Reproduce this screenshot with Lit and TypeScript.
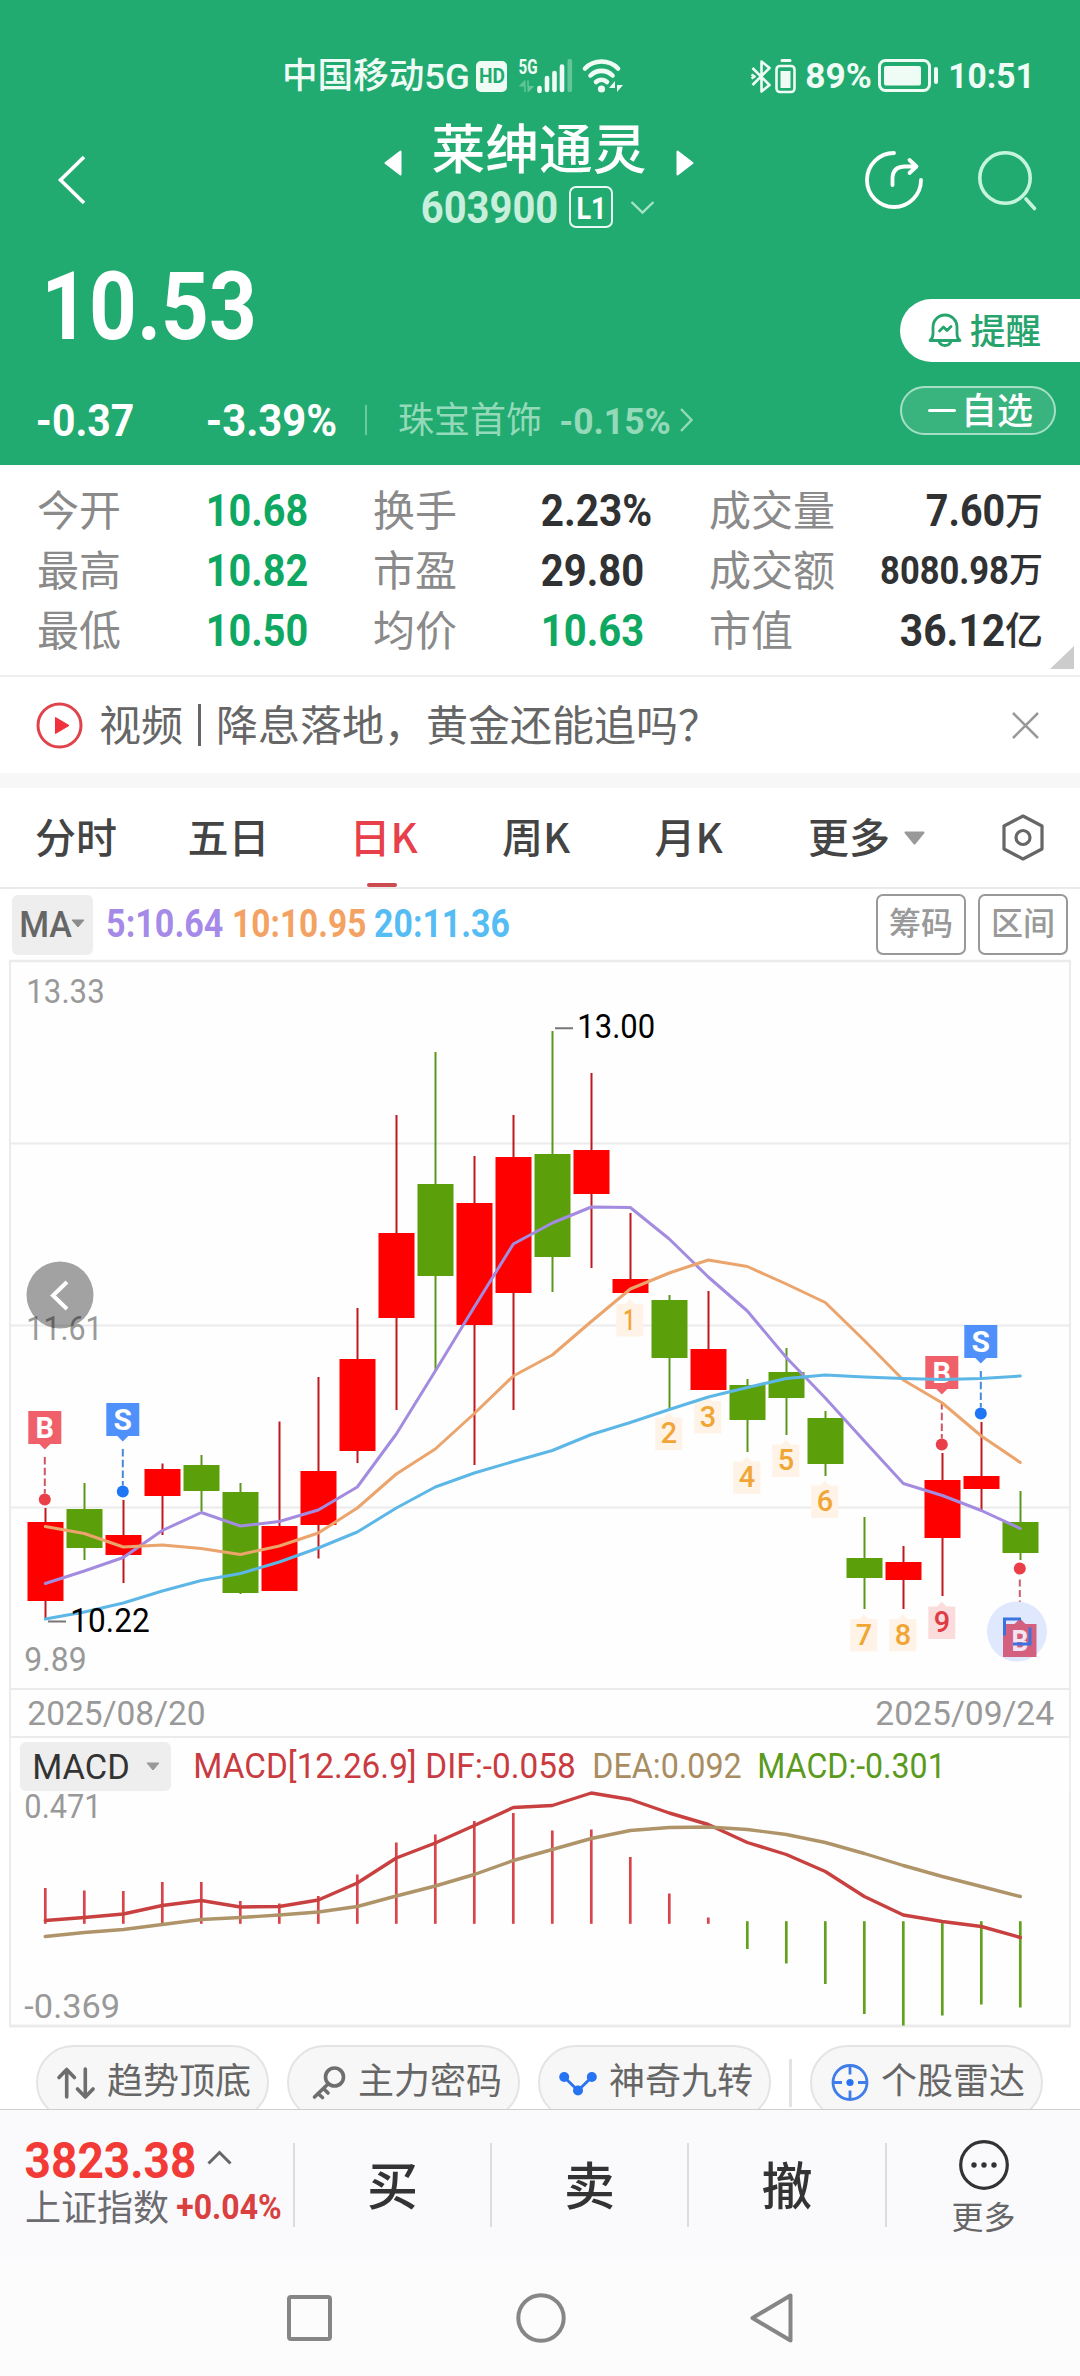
import { LitElement, html, svg, css } from 'lit';
import { customElement } from 'lit/decorators.js';

/** One trading day: direction, body top/bottom and wick top/bottom in chart units. */
type Candle = ['r' | 'g', number, number, number, number];

const CANDLES: Candle[] = [
  ['r', 1521.5, 1600.5, 1507.5, 1618], ['g', 1508.5, 1547.5, 1482.5, 1559.5],
  ['r', 1534.5, 1554.5, 1499.5, 1582.5], ['r', 1468.5, 1495.5, 1463, 1534.5],
  ['g', 1464.5, 1490.5, 1454.5, 1510.5], ['g', 1491.5, 1592.5, 1482.5, 1593.5],
  ['r', 1525.5, 1590.5, 1421, 1590.5], ['r', 1470.5, 1524.5, 1376.5, 1558],
  ['r', 1358.5, 1450.5, 1307.5, 1462.5], ['r', 1232.5, 1317.5, 1114.5, 1409.5],
  ['g', 1183.5, 1275.5, 1051.5, 1370], ['r', 1202.5, 1324.5, 1155.5, 1464.5],
  ['r', 1156.5, 1292.5, 1114.5, 1409.5], ['g', 1153.5, 1256.5, 1030.5, 1291.5],
  ['r', 1149.5, 1193.5, 1072.5, 1267.5], ['r', 1278.5, 1292.5, 1212.5, 1292.5],
  ['g', 1299.5, 1357.5, 1294.5, 1408], ['r', 1348.5, 1389.5, 1290.5, 1389.5],
  ['g', 1384.5, 1419.5, 1378.5, 1451.5], ['g', 1371.5, 1397.5, 1347.5, 1434.5],
  ['g', 1417.5, 1463.5, 1410.5, 1475.5], ['g', 1557.5, 1577.5, 1516.5, 1608.5],
  ['r', 1561.5, 1579.5, 1545.5, 1608.5], ['r', 1479.5, 1537.5, 1452.5, 1595.5],
  ['r', 1475.5, 1488.5, 1421.5, 1509.5], ['g', 1521.5, 1552.5, 1490.5, 1559.5],
];
const MA5 = [1583, 1570.5, 1557, 1530, 1512, 1525.5, 1521, 1509.5, 1486.5, 1433.5, 1370.5, 1306.5, 1243.5, 1222.5, 1206.5, 1207, 1238.5, 1276.5, 1310.5, 1357, 1397.5, 1440.5, 1483, 1495, 1510, 1528];
const MA10 = [1526, 1533, 1546.5, 1544.5, 1548, 1554, 1545.5, 1532.5, 1507.5, 1473.5, 1448.5, 1413, 1375.5, 1354.5, 1321, 1288.5, 1272.5, 1259.5, 1266, 1283.5, 1302, 1340, 1379.5, 1402.5, 1435.5, 1462];
const MA20 = [1618.5, 1611.5, 1602.5, 1590.5, 1580, 1573, 1561.5, 1547.5, 1531.5, 1507.5, 1486.5, 1472.5, 1461, 1450, 1434, 1422, 1409, 1396.5, 1387, 1378, 1374.5, 1376.5, 1378, 1379, 1378, 1375.5];
const BARS = [1887.5, 1890, 1890.5, 1881.5, 1881.5, 1900.5, 1903, 1895.5, 1874, 1842, 1834, 1820.5, 1812.5, 1830, 1829, 1856.5, 1893, 1917, 1948.5, 1963, 1983.5, 2013.5, 2025, 2015, 2004, 2007];
const DIF = [1920, 1917, 1913.5, 1905, 1900, 1906.5, 1906, 1899.5, 1882.5, 1857.5, 1842.5, 1825, 1807, 1805, 1792.5, 1799, 1812.5, 1824, 1842, 1854, 1871, 1896, 1914.5, 1921, 1926, 1937];
const DEA = [1936, 1932, 1929, 1924, 1919, 1917, 1914.5, 1911.5, 1906, 1895.5, 1885.5, 1874, 1860, 1849, 1838, 1830, 1827, 1826.5, 1829, 1834, 1842, 1853, 1865, 1876, 1886, 1896];
/** Nine-turn counters: candle index and tag top. */
const TURNS: [number, number][] = [[15, 1303.5], [16, 1417], [17, 1400.5], [18, 1461], [19, 1444], [20, 1485], [21, 1618.5], [22, 1618.5], [23, 1606]];
/** Trade flags: letter, candle index, flag top, dot centre. */
const FLAGS: ['B' | 'S', number, number, number][] = [['B', 0, 1410.5, 1499], ['S', 2, 1402.5, 1491], ['B', 23, 1355.5, 1444], ['S', 24, 1324.5, 1413]];

const px = (i: number) => 45.3 + 39 * i;
const pts = (ys: number[]) => ys.map((y, i) => `${px(i)},${y}`).join(' ');

/** Figures set to a given visible width and cap height. */
const num = (t: string, w: number, cap: number, cls = '') => {
  const s = cap / 0.711;
  return html`<svg class="num ${cls}" width=${w} height=${cap}><text x=${-0.05 * s} y=${cap} font-size=${s} textLength=${w + 0.1 * s} lengthAdjust="spacingAndGlyphs">${t}</text></svg>`;
};
const label = (t: string, x: number, base: number, w: number, cap: number, cls: string) => {
  const s = cap / 0.711;
  return svg`<text class=${cls} x=${x - 0.05 * s} y=${base} font-size=${s} textLength=${w + 0.1 * s} lengthAdjust="spacingAndGlyphs">${t}</text>`;
};

const base = css`
  :host { display: block; box-sizing: border-box; }
  * { box-sizing: border-box; }
  svg { display: block; flex: none; overflow: visible; fill: none; }
  .num text { fill: currentColor; }
  .num, .lab { font-family: Roboto, 'Liberation Sans', sans-serif; }
  .b { font-weight: 700; }
  .m { font-weight: 500; }
`;

@customElement('quote-header')
class QuoteHeader extends LitElement {
  static styles = [base, css`
    :host { background: #22ab70; color: #fff; height: 465px; }
    .status { height: 104px; padding: 47px 47px 0 282px; display: flex; align-items: center; font-size: 35.6px; line-height: 56px; font-weight: 500; color: #effcf5; }
    .status .zh { margin-top: -5px; width: 144px; white-space: nowrap; }
    .icons { margin-left: 7px; }
    .right { margin-left: auto; display: flex; align-items: center; }
    .bt { margin-right: 10px; }
    .batt { margin: 0 12px 0 8px; }
    .nav { height: 150px; padding: 0 43px 0 57px; display: flex; align-items: center; justify-content: space-between; }
    .back { margin-top: 2px; }
    .mid { display: flex; flex-direction: column; align-items: center; gap: 6px; margin: 0 0 14px 128px; }
    .name { display: flex; align-items: center; gap: 30px; font-size: 53.7px; line-height: 64px; height: 64px; font-weight: 500; }
    .name svg { margin-top: 29px; }
    .name span { margin-top: -4px; }
    .code { display: flex; align-items: center; height: 42px; color: #c8efdb; }
    .lv { width: 44px; height: 42px; margin: 0 18px 0 13px; border: 2px solid #eafaf2; border-radius: 7px; display: flex; align-items: center; justify-content: center; color: #fff; }
    .tools { display: flex; gap: 54px; margin-top: 2px; }
    .body { display: flex; justify-content: space-between; padding-left: 38px; }
    .price { padding: 18px 0 0 8px; height: 145px; }
    .row { display: flex; align-items: center; height: 40px; margin-top: 1px; }
    .pct { margin-left: 76px; }
    .sep { width: 2px; height: 30px; margin: 0 31px 0 30px; background: #6cc8a0; }
    .ind { font-size: 36px; line-height: 40px; margin: -7px 19px 0 0; color: #94d9b9; font-weight: 400; }
    .dim { color: #94d9b9; }
    .arrow { margin-left: 11px; }
    .side { width: 180px; padding-top: 45px; }
    .alarm { height: 63px; border-radius: 32px 0 0 32px; background: #fff; color: #27a46e; display: flex; align-items: center; padding-left: 28px; font-size: 35.5px; line-height: 50px; font-weight: 500; }
    .alarm span { margin: -3px 0 0 8px; }
    .fav { width: 156px; height: 49px; margin-top: 24px; border: 2px solid #a5dfc5; border-radius: 25px; background: #3ab47f; display: flex; align-items: center; padding-left: 26px; font-size: 36px; line-height: 45px; font-weight: 500; }
    .fav i { width: 28px; height: 3px; background: #fff; border-radius: 2px; }
    .fav span { margin: -4px 0 0 5px; }
  `];

  render() {
    return html`
      <div class="status">
        <span class="zh">中国移动</span>${num('5G', 42, 25.5, 'm')}
        <svg class="icons" width="148" height="34" viewBox="475 58 148 34">
          <rect x="476" y="60" width="31" height="31" rx="5" fill="#effcf5" />
          <text class="lab b" x="479" y="82" font-size="21" textLength="26" lengthAdjust="spacingAndGlyphs" fill="#22ab70">HD</text>
          <text class="lab b" x="518.5" y="72.5" font-size="20" textLength="19" lengthAdjust="spacingAndGlyphs" fill="#effcf5">5G</text>
          <path d="M525 91V79.500l-5.500 5.500h5.500zM528 79.500v11.500l5.500-5.500h-5.500z" fill="#63c598" stroke="#63c598" stroke-width="1" />
          <path d="M539.5 90v-3M547 89v-12M554.500 89V72M562 89V65.500" stroke="#effcf5" stroke-width="4.600" stroke-linecap="round" />
          <path d="M569.800 89V60" stroke="#63c598" stroke-width="4.600" stroke-linecap="round" />
          <g stroke="#effcf5" stroke-width="4.600" stroke-linecap="round"><path d="M585 67.500a23 23 0 0 1 33 0M590.500 74.500a15.500 15.500 0 0 1 22 0M596 81a8 8 0 0 1 11 0" /></g>
          <circle cx="601.500" cy="88" r="3.600" fill="#effcf5" />
          <path d="M615 91V80l-6 7h6zM617 80v11l6-7h-6z" fill="#effcf5" />
        </svg>
        <div class="right">
          <svg class="bt" width="46" height="34" viewBox="752 58 46 34" stroke="#effcf5" stroke-width="2.600">
            <path d="M753.500 67l17 17-8 6.500V60.500l8 6.500-17 17M752.500 73.500l3 2-3 2" stroke-linejoin="round" />
            <rect x="777.500" y="65" width="18" height="26" rx="3.500" />
            <path d="M783 59.500h8" stroke-width="3" stroke-linecap="round" />
            <rect x="781.500" y="70" width="10" height="17" fill="#effcf5" stroke="none" />
          </svg>
          ${num('89%', 63, 25, 'b')}
          <svg class="batt" width="60" height="33" viewBox="878 59 60 33">
            <rect x="879.500" y="60.500" width="50" height="30" rx="6" stroke="#effcf5" stroke-width="3" />
            <rect x="884" y="66" width="37" height="19.500" rx="2" fill="#effcf5" />
            <rect x="934" y="67" width="4" height="17" rx="2" fill="#effcf5" />
          </svg>
          ${num('10:51', 83, 25, 'b')}
        </div>
      </div>
      <div class="nav">
        <svg class="back" width="28" height="48" viewBox="0 0 28 48" stroke="#fff" stroke-width="3.600"><path d="M27 1L3.500 24 27 47" /></svg>
        <div class="mid">
          <div class="name">
            <svg width="18" height="26" viewBox="0 0 18 26"><path d="M16.500 1.500v23L1.500 13z" fill="#fff" stroke="#fff" stroke-width="2" stroke-linejoin="round" /></svg>
            <span>莱绅通灵</span>
            <svg width="18" height="26" viewBox="0 0 18 26"><path d="M1.500 1.500v23L16.500 13z" fill="#fff" stroke="#fff" stroke-width="2" stroke-linejoin="round" /></svg>
          </div>
          <div class="code">
            ${num('603900', 133, 32, 'b')}
            <div class="lv">${num('L1', 27, 22.5, 'b')}</div>
            <svg width="23" height="13" viewBox="0 0 23 13" stroke="#a6e2c7" stroke-width="2.400"><path d="M.5 1l11 10.500L22.500 1" /></svg>
          </div>
        </div>
        <div class="tools">
          <svg width="59" height="59" viewBox="865 151 59 59" stroke="#fff" stroke-width="3.800" stroke-linecap="round" stroke-linejoin="round">
            <path d="M894 153a27 27 0 1 0 27 27M892.500 185v-6q0-12.500 12.500-12.500h10M909.500 160l7 6.500-7 6.500" />
          </svg>
          <svg width="59" height="59" viewBox="978 150 59 59" stroke="#c5f4dd" stroke-width="3.600" stroke-linecap="round">
            <circle cx="1005" cy="177" r="25.200" /><path d="M1026 198l8.500 9.500" />
          </svg>
        </div>
      </div>
      <div class="body">
        <div>
          <div class="price">${num('10.53', 206, 67, 'b')}</div>
          <div class="row">
            ${num('-0.37', 94, 31, 'b')}
            ${num('-3.39%', 127, 31, 'b pct')}
            <div class="sep"></div>
            <span class="ind">珠宝首饰</span>
            ${num('-0.15%', 108, 26.5, 'b dim')}
            <svg class="arrow" width="13" height="24" viewBox="0 0 13 24" stroke="#94d9b9" stroke-width="2.500"><path d="M1 1l10.500 11L1 23" /></svg>
          </div>
        </div>
        <div class="side">
          <div class="alarm">
            <svg width="34" height="35" viewBox="0 0 34 35" stroke="#27a46e" stroke-width="2.800" stroke-linejoin="round" stroke-linecap="round">
              <path d="M2 27.500q3-2 3-6.500v-7a12 12 0 0 1 24 0v7q0 4.500 3 6.500zM11 28.500a6.500 6.500 0 0 0 12 0M11.500 18l4-4 3.500 3.500 4-4" />
            </svg>
            <span>提醒</span>
          </div>
          <div class="fav"><i></i><span>自选</span></div>
        </div>
      </div>`;
  }
}

@customElement('quote-stats')
class QuoteStats extends LitElement {
  static styles = [base, css`
    :host { background: #fff; height: 212px; padding: 15px 0 0 37px; border-bottom: 2px solid #eee; position: relative; color: #303133; }
    .row { display: grid; grid-template-columns: 171px 165px 170px 166px 127px 207px; height: 60px; align-items: center; }
    .k { font-size: 42px; line-height: 56px; color: #8a8a8a; margin-top: -5px; white-space: nowrap; }
    .up { color: #0fa862; }
    .big { display: flex; align-items: center; justify-content: flex-end; font-weight: 500; gap: 2px; }
    .big span { font-size: 38px; line-height: 56px; margin-top: -4px; }
    .big .s { font-size: 34px; }
    .tri { position: absolute; right: 6px; bottom: 6px; width: 24px; height: 23px; background: #ccc; clip-path: polygon(100% 0, 100% 100%, 0 100%); }
  `];

  render() {
    return html`
      <div class="row">
        <span class="k">今开</span>${num('10.68', 98, 31, 'b up')}
        <span class="k">换手</span>${num('2.23%', 107, 31, 'b')}
        <span class="k">成交量</span><div class="big">${num('7.60', 75, 31, 'b')}<span>万</span></div>
      </div>
      <div class="row">
        <span class="k">最高</span>${num('10.82', 98, 31, 'b up')}
        <span class="k">市盈</span>${num('29.80', 99, 31, 'b')}
        <span class="k">成交额</span><div class="big">${num('8080.98', 125, 27.5, 'b')}<span class="s">万</span></div>
      </div>
      <div class="row">
        <span class="k">最低</span>${num('10.50', 98, 31, 'b up')}
        <span class="k">均价</span>${num('10.63', 99, 31, 'b up')}
        <span class="k">市值</span><div class="big">${num('36.12', 101, 31, 'b')}<span>亿</span></div>
      </div>
      <div class="tri"></div>`;
  }
}

@customElement('news-strip')
class NewsStrip extends LitElement {
  static styles = [base, css`
    :host { height: 111px; border-bottom: 15px solid #f7f7f7; background: #fff; display: flex; align-items: center; padding: 0 41px 0 36px; font-size: 42px; line-height: 60px; color: #666; }
    span { margin-top: -5px; white-space: nowrap; }
    .tag { margin-left: 16px; }
    .bar { width: 3px; height: 42px; background: #666; margin: 0 15px 0 15px; }
    .x { margin-left: auto; }
  `];

  render() {
    return html`
      <svg width="47" height="47" viewBox="0 0 47 47"><circle cx="23.500" cy="23.500" r="21.500" stroke="#e0434b" stroke-width="3" /><path d="M19.500 15.500v16L33 23.500z" fill="#f0323c" stroke="#f0323c" stroke-width="1" stroke-linejoin="round" /></svg>
      <span class="tag">视频</span><div class="bar"></div><span>降息落地，黄金还能追吗？</span>
      <svg class="x" width="27" height="27" viewBox="0 0 27 27" stroke="#999" stroke-width="2.500"><path d="M1 1l25 25M26 1L1 26" /></svg>`;
  }
}

@customElement('period-tabs')
class PeriodTabs extends LitElement {
  static styles = [base, css`
    :host { height: 101px; background: #fff; border-bottom: 2px solid #ebebeb; display: grid; grid-template-columns: 152.500px 162px 152.500px 152.500px 153.500px 194px 1fr; padding-left: 35px; font-size: 41px; line-height: 60px; font-weight: 500; color: #444; }
    .t { height: 99px; display: flex; align-items: center; position: relative; }
    .t span { margin-top: -5px; white-space: nowrap; }
    .on { color: #e8404a; }
    .on::after { content: ''; position: absolute; left: 17px; bottom: 0; width: 30px; height: 4px; border-radius: 2px; background: #cc4a50; }
    .down { margin-left: 14px; }
  `];

  render() {
    return html`
      ${['分时', '五日', '日K', '周K', '月K'].map((t, i) => html`<div class="t ${i === 2 ? 'on' : ''}"><span>${t}</span></div>`)}
      <div class="t"><span>更多</span><svg class="down" width="21" height="14" viewBox="0 0 21 14"><path d="M1.500 1.500h18l-9 11z" fill="#999" stroke="#999" stroke-width="2" stroke-linejoin="round" /></svg></div>
      <div class="t"><svg width="42" height="47" viewBox="0 0 42 47" stroke="#666" stroke-width="3.200" stroke-linejoin="round"><path d="M21 2L40 12v23L21 45 2 35V12z" /><circle cx="21" cy="23.500" r="7" /></svg></div>`;
  }
}

@customElement('k-chart')
class KChart extends LitElement {
  static styles = [base, css`
    :host { background: #fff; }
    .ma { height: 71px; padding: 0 12px; display: flex; align-items: center; }
    .pick { display: flex; align-items: center; background: #eee; border-radius: 6px; }
    .pick.a { width: 81px; height: 60px; padding: 0 0 2px 9px; gap: 1px; color: #666; margin-right: 15px; }
    .vals { display: flex; gap: 12px; margin-top: -2px; }
    .p { color: #a58ae8; } .o { color: #f4a263; } .l { color: #55bdf3; }
    .btns { margin-left: auto; display: flex; gap: 12px; }
    .btn { width: 90px; height: 61px; border: 2px solid #999; border-radius: 7px; color: #999; font-size: 32px; line-height: 50px; text-align: center; font-weight: 500; }
    .head { height: 54px; margin: 0 9px; border: solid #eee; border-width: 0 2px; padding: 3px 0 0 9px; display: flex; align-items: center; background: #fefefe; }
    .pick.c { width: 151px; height: 49px; padding-left: 14px; gap: 18px; color: #333; margin-right: 24px; }
    .r { color: #c93b40; } .d { color: #a98d62; } .g { color: #5a9a1c; }
    .dif { margin-left: 12px; } .dea { margin-left: 20px; } .mac { margin-left: 19px; }
    .axis { fill: #999; }
    .peak { fill: #000; }
    .grid { stroke: #ebebeb; stroke-width: 2; }
    .turn { fill: #f0a535; font-weight: 500; }
    .nine { fill: #e03c46; }
    .flag { fill: #fff; font-weight: 700; }
    .ln { stroke-linejoin: round; stroke-linecap: round; stroke-width: 3; }
    .ln.w { stroke-width: 3.4; }
    .panel { background: #fff; }
  `];

  private flag([c, i, top, dot]: (typeof FLAGS)[number]) {
    const x = px(i) - 0.5;
    const fill = c === 'B' ? '#f0606a' : '#4f90fb';
    return svg`
      <path d="M${x - 16.5} ${top}h33v33h-11l-5.500 5.500-5.500-5.500h-11z" fill=${fill} />
      ${label(c, x - 7.7, top + 27, 15.5, 21, 'lab flag')}
      <path d="M${x} ${top + 46}V${dot - 6}" stroke=${c === 'B' ? '#d05560' : '#4788d8'} stroke-width="2" stroke-dasharray="7.500 3.200" />
      <circle cx=${x} cy=${dot} r="6" fill=${c === 'B' ? '#ea3f49' : '#1f76f5'} />`;
  }

  render() {
    return html`
      <div class="ma">
        <div class="pick a">${num('MA', 49, 26.5, 'm')}<svg width="14" height="9" viewBox="0 0 14 9"><path d="M1 1h12L7 8z" fill="#8c8c8c" stroke="#8c8c8c" stroke-linejoin="round" /></svg></div>
        <div class="vals">${num('5:10.64', 113.5, 27, 'b p')}${num('10:10.95', 130.5, 27, 'b o')}${num('20:11.36', 132, 27, 'b l')}</div>
        <div class="btns"><div class="btn">筹码</div><div class="btn">区间</div></div>
      </div>
      <svg class="panel" width="1080" height="778" viewBox="0 959.500 1080 778">
        <rect x="10" y="961" width="1060" height="776" fill="#fefefe" />
        <path class="grid" d="M10 1143H1070M10 1325H1070M10 1507H1070M10 1688.500H1070M10 1736.500H1070M10 960V1737.500M1070 960V1737.500" />
        <path d="M9 960.500H1071" stroke="#ebebeb" stroke-width="2.500" />
        ${label('13.33', 28, 1002, 75, 23.7, 'lab axis')}
        ${label('11.61', 28, 1339, 73, 23.7, 'lab axis')}
        ${label('9.89', 26, 1670, 59, 23.7, 'lab axis')}
        ${label('2025/08/20', 29, 1724, 175, 23.5, 'lab axis')}
        ${label('2025/09/24', 877, 1724, 175.5, 23.5, 'lab axis')}
        ${TURNS.map(([i, y], k) => {
          const x = px(i) - 0.5;
          const bg = k === 8 ? '#fbdcdc' : '#fef3e6';
          return svg`<path d="M${x - 13.5} ${y}h9l4.500-5 4.500 5h9v32.500h-27z" fill=${bg} />
            ${label(String(k + 1), k ? x - 6.5 : x - 5, y + 25.500, k ? 13.5 : 9, 20.7, k === 8 ? 'lab turn nine' : 'lab turn')}`;
        })}
        ${CANDLES.map(([c, a, b, h, l], i) => {
          const x = px(i);
          return svg`<path d="M${x + 0.2} ${h}V${l}" stroke=${c === 'r' ? '#c0181c' : '#5a981c'} stroke-width="2" />
            <rect x=${x - 17.8} y=${a} width="36" height=${b - a} fill=${c === 'r' ? '#fe0000' : '#5b9f0b'} />`;
        })}
        ${FLAGS.map((f) => this.flag(f))}
        <polyline class="ln" points=${pts(MA5)} stroke="#a38ce0" />
        <polyline class="ln" points=${pts(MA10)} stroke="#eba46c" />
        <polyline class="ln" points=${pts(MA20)} stroke="#5cb7e6" />
        <path d="M48 1621h18M555 1027.800h18" stroke="#777" stroke-width="2" />
        ${label('10.22', 72, 1631, 76, 23.5, 'lab peak')}
        ${label('13.00', 579, 1037.5, 74.5, 23.5, 'lab peak')}
        <circle cx="1019.800" cy="1568" r="6" fill="#ea3f49" />
        <path d="M1019.800 1579V1614" stroke="#c8606e" stroke-width="2" stroke-dasharray="7 3.500" />
        <circle cx="1017" cy="1631" r="30" fill="#dfe8fc" />
        <path d="M1003 1623.500h11.500l5.500-5.500 5.500 5.500h11v33h-33.500z" fill="#d4607f" />
        <text class="lab b" x="1011.500" y="1650.500" font-size="30" textLength="17" lengthAdjust="spacingAndGlyphs" fill="#f3e4f2">B</text>
        <path d="M1004.500 1635v-16.500h16.500M1030 1627v16.500h-17" stroke="#3b72e0" stroke-width="3" />
        <circle cx="60" cy="1294.500" r="33.500" fill="#000" fill-opacity=".36" />
        <path d="M67 1281.500l-14 13.500 14 13.500" stroke="#fff" stroke-width="4" />
      </svg>
      <div class="head">
        <div class="pick c">${num('MACD', 94, 25)}<svg width="14" height="9" viewBox="0 0 14 9"><path d="M1 1h12L7 8z" fill="#999" stroke="#999" stroke-linejoin="round" /></svg></div>
        ${num('MACD[12.26.9]', 220, 24.3, 'r')}${num('DIF:-0.058', 147, 24.3, 'r dif')}${num('DEA:0.092', 146, 24.3, 'd dea')}${num('MACD:-0.301', 185, 24.3, 'g mac')}
      </div>
      <svg class="panel" width="1080" height="236" viewBox="0 1791.500 1080 236">
        <rect x="10" y="1791.500" width="1060" height="233" fill="#fefefe" />
        <path class="grid" d="M10 1791V2026M1070 1791V2026" />
        <path d="M9 2025.500H1071" stroke="#ebebeb" stroke-width="3" />
        ${label('0.471', 26, 1817, 74, 23.5, 'lab axis')}
        ${label('-0.369', 26, 2017.5, 92.5, 23.5, 'lab axis')}
        ${BARS.map((y, i) => svg`<path d="M${px(i)} ${i < 18 ? 1923.3 : 1920.7}V${y}" stroke=${i < 18 ? '#d8444a' : '#62a01e'} stroke-width="2.700" />`)}
        <polyline class="ln w" points=${pts(DIF)} stroke="#c8403f" />
        <polyline class="ln w" points=${pts(DEA)} stroke="#ae9468" />
      </svg>`;
  }
}

@customElement('tool-chips')
class ToolChips extends LitElement {
  static styles = [base, css`
    :host { height: 81px; overflow: hidden; display: flex; align-items: flex-start; padding: 17px 0 0 36px; background: #fff; gap: 18px; }
    .chip { flex: none; width: 233px; height: 75px; border: 2px solid #e4e4e4; border-radius: 38px; background: #f7f7f7; display: flex; align-items: center; padding: 0 0 6px 19px; font-size: 36px; line-height: 54px; color: #666; }
    .chip span { margin: -4px 0 0 auto; padding-right: 16px; white-space: nowrap; }
    .chip svg { margin-top: 6px; }
    .sep { flex: none; width: 3px; height: 48px; margin-top: 14px; background: #e2e2e2; }
  `];

  render() {
    return html`
      <div class="chip"><svg width="38" height="32" viewBox="57 2066 38 32" stroke="#6e6e6e" stroke-width="3.600" stroke-linecap="round" stroke-linejoin="round"><path d="M66.700 2096V2069M59 2076.500l7.700-8 7.700 8M85.300 2068V2095M77.500 2088l7.800 8 7.800-8" /></svg><span>趋势顶底</span></div>
      <div class="chip"><svg width="38" height="34" viewBox="308 2064 38 34" stroke="#6e6e6e" stroke-width="3.600" stroke-linecap="round"><circle cx="334.500" cy="2075" r="9" /><path d="M328 2082l-13.500 13M318 2091.500l4.500 4M323.500 2086.500l4.500 4.500" /></svg><span>主力密码</span></div>
      <div class="chip"><svg width="38" height="34" viewBox="559 2065 38 34" stroke="#2f74ee" stroke-width="3"><path d="M564 2076l14 13.500 14-13.500" /><g fill="#2673f3" stroke="none"><circle cx="564.200" cy="2076" r="5" /><circle cx="591.800" cy="2076" r="5" /><circle cx="578" cy="2089.500" r="5" /></g></svg><span>神奇九转</span></div>
      <div class="sep"></div>
      <div class="chip"><svg width="38" height="37" viewBox="831 2064.500 38 37" stroke="#3f7ee8" stroke-width="2.800"><circle cx="850" cy="2083" r="17" /><path d="M850 2066v9M850 2091v9M833 2083h9M858 2083h9" /><circle cx="850" cy="2083" r="3.600" fill="#2673f3" stroke="none" /></svg><span>个股雷达</span></div>`;
  }
}

@customElement('trade-bar')
class TradeBar extends LitElement {
  static styles = [base, css`
    .bar { height: 151px; border-top: 1px solid #cfcfcf; background: #fafafc; display: grid; grid-template-columns: 293px 197px 197px 198px 195px; }
    .idx { padding: 33px 0 0 27px; }
    .top { display: flex; align-items: center; gap: 13px; color: #f23a37; height: 35px; }
    .top .up { margin-top: -7px; }
    .sub { display: flex; align-items: center; margin: 10px 0 0 -2px; font-size: 36px; line-height: 40px; color: #6b6b70; white-space: nowrap; gap: 9px; }
    .sub span { margin-top: -3px; }
    .chg { color: #d9403f; }
    .act { margin: 33px 0; height: 84px; border-left: 2px solid #dcdce0; display: flex; align-items: center; justify-content: center; font-size: 51px; line-height: 70px; font-weight: 500; color: #333; }
    .act span { margin-top: -4px; }
    .more { flex-direction: column; font-size: 32px; line-height: 40px; font-weight: 400; color: #666; justify-content: flex-start; }
    .more svg { margin-top: -3px; }
    .act.more span { margin-top: 5px; }
    .sys { height: 116px; background: #fcfcfc; display: flex; justify-content: center; align-items: center; gap: 184px; }
  `];

  render() {
    return html`
      <div class="bar">
        <div class="idx">
          <div class="top">${num('3823.38', 167, 35, 'b')}<svg class="up" width="25" height="15" viewBox="0 0 25 15" stroke="#666" stroke-width="3"><path d="M1.500 13.500l11-11 11 11" /></svg></div>
          <div class="sub"><span>上证指数</span>${num('+0.04%', 102, 24.5, 'b chg')}</div>
        </div>
        <div class="act"><span>买</span></div>
        <div class="act"><span>卖</span></div>
        <div class="act"><span>撤</span></div>
        <div class="act more">
          <svg width="50" height="50" viewBox="0 0 50 50"><circle cx="25" cy="25" r="23.300" stroke="#333" stroke-width="3.200" /><g fill="#333"><circle cx="15" cy="25" r="2.700" /><circle cx="25" cy="25" r="2.700" /><circle cx="35" cy="25" r="2.700" /></g></svg>
          <span>更多</span>
        </div>
      </div>
      <div class="sys">
        <svg width="45" height="46" viewBox="0 0 45 46" stroke="#868686" stroke-width="4"><rect x="2" y="2" width="41" height="42" rx="2" /></svg>
        <svg width="50" height="50" viewBox="0 0 50 50" stroke="#868686" stroke-width="4"><circle cx="25" cy="25" r="22.700" /></svg>
        <svg width="43" height="50" viewBox="0 0 43 50" stroke="#868686" stroke-width="4" stroke-linejoin="round"><path d="M40.500 2.500v45L2.500 25z" /></svg>
      </div>`;
  }
}

@customElement('app-root')
class AppRoot extends LitElement {
  static styles = css`
    :host { display: block; width: 1080px; height: 2376px; overflow: hidden; background: #fcfcfc; font-family: 'Noto Sans CJK SC', sans-serif; }
  `;

  render() {
    return html`
      <quote-header></quote-header>
      <quote-stats></quote-stats>
      <news-strip></news-strip>
      <period-tabs></period-tabs>
      <k-chart></k-chart>
      <tool-chips></tool-chips>
      <trade-bar></trade-bar>`;
  }
}
